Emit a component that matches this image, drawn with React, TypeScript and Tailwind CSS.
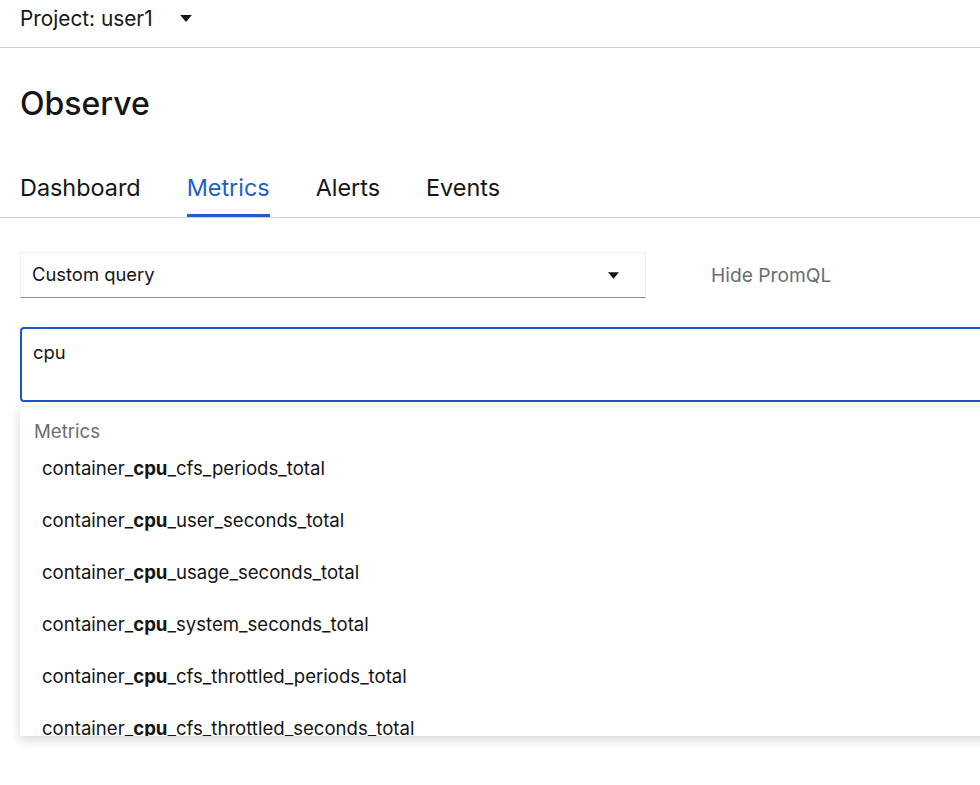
import React from "react";

const items = [
  "cfs_periods_total",
  "user_seconds_total",
  "usage_seconds_total",
  "system_seconds_total",
  "cfs_throttled_periods_total",
  "cfs_throttled_seconds_total",
];

function Caret({ className }: { className?: string }) {
  return (
    <svg viewBox="0 0 10 6" className={className} fill="currentColor">
      <path d="M0 0 L10 0 L5 6 Z" />
    </svg>
  );
}

export default function App() {
  return (
    <div
      className="w-[980px] h-[785px] overflow-hidden bg-white text-[#151515]"
      style={{ fontFamily: "Inter, 'Noto Sans', sans-serif" }}
    >
      {/* header */}
      <div className="h-[48px] border-b border-[#d2d2d2] flex items-center pl-[20px] pb-[8px]">
        <span className="text-[20.8px] leading-none">Project: user1</span>
        <Caret className="w-[12px] h-[7px] ml-[27px] mt-[-2px]" />
      </div>

      {/* title */}
      <div className="pl-[20px] pt-[38px]">
        <h1 className="text-[32px] font-medium leading-[36px]">Observe</h1>
      </div>

      {/* tabs */}
      <div className="mt-[50px] border-b border-[#d2d2d2] flex pl-[20px] gap-[46px] text-[23.4px]">
        <div className="pb-[15px] pt-[2px] leading-[28px]">Dashboard</div>
        <div className="pb-[12px] pt-[2px] leading-[28px] text-[#1f5fc6] border-b-[3px] border-[#1f5fc6]">
          Metrics
        </div>
        <div className="pb-[15px] pt-[2px] leading-[28px]">Alerts</div>
        <div className="pb-[15px] pt-[2px] leading-[28px]">Events</div>
      </div>

      {/* controls */}
      <div className="flex items-center pl-[20px] mt-[34px]">
        <div className="w-[626px] h-[46px] border border-[#f0f0f0] border-b-[#8a8d90] flex items-center justify-between pl-[11px] pr-[26px]">
          <span className="text-[18.4px]">Custom query</span>
          <Caret className="w-[11px] h-[7px]" />
        </div>
        <span className="ml-[65px] text-[19.2px] text-[#6a6e73]">Hide PromQL</span>
      </div>

      {/* query textarea */}
      <div className="pl-[20px] mt-[29px] relative">
        <div className="w-[980px] h-[75px] border-2 border-[#1b55c6] rounded-[4px] pl-[11px] pt-[12px] text-[18.4px] leading-[22px]">
          cpu
        </div>

        {/* suggestions menu */}
        <div className="absolute left-[20px] top-[79px] w-[980px] h-[330px] bg-white overflow-hidden shadow-[0_4px_10px_rgba(3,3,3,0.16)] border-t-[2px] border-[#f5f5f5]">
          <div className="pl-[14px] pt-[12px] text-[18.6px] text-[#6a6e73] leading-[22px]">Metrics</div>
          <div className="pl-[22px] pt-[1px]">
            {items.map((s) => (
              <div key={s} className="h-[52px] flex items-center text-[18.6px]">
                <span>
                  container_<span className="font-bold">cpu</span>_{s}
                </span>
              </div>
            ))}
          </div>
        </div>
      </div>
    </div>
  );
}
